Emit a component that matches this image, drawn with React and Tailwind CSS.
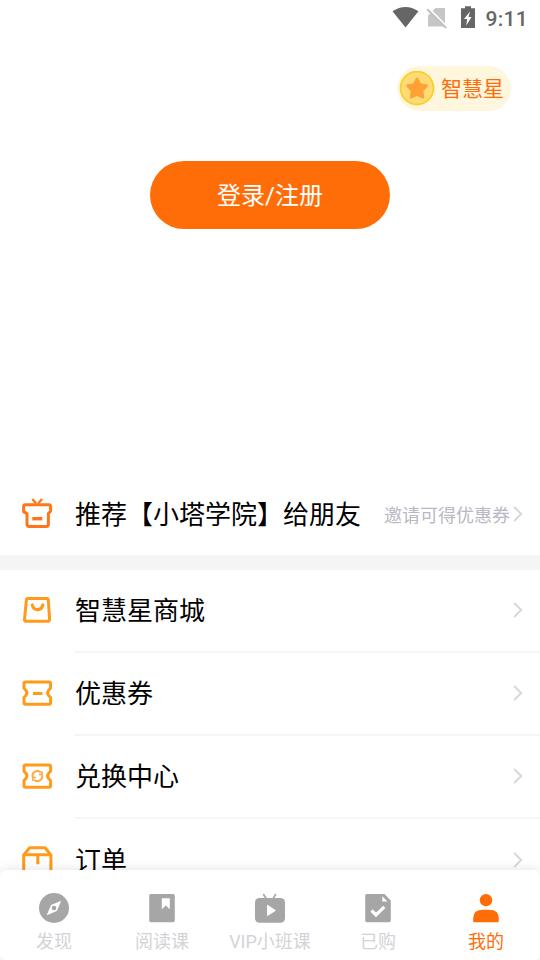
const GiftIcon = () => (
  <svg className="h-8 w-8" viewBox="0 0 32 32" fill="none" stroke="#ff7518" strokeWidth="3" strokeLinejoin="round">
    <path d="M4.3 6.7H27.7Q29.6 6.7 29.6 8.6V13.2L27.4 15.6V26.3Q27.4 28.4 25.3 28.4H8.2Q6 28.4 6 26.3V15.6L2.6 13.6V8.6Q2.6 6.7 4.3 6.7Z" />
    <path d="M11.3 1L15.2 5.5M20.9 1L17.3 5.5" strokeWidth="2.3" />
    <path d="M11.3 20.7H21.3" strokeWidth="3.4" />
  </svg>
);

const BagIcon = () => (
  <svg className="h-8 w-8" viewBox="0 0 32 32" fill="none" stroke="#ff9a1a" strokeWidth="3" strokeLinejoin="round">
    <path d="M6.8 4.6H25.9Q27.2 4.6 27.3 6L28.6 25.5Q28.7 27.2 27 27.2H5Q3.4 27.2 3.5 25.5L5.4 6Q5.6 4.6 6.8 4.6Z" />
    <path d="M11.3 11Q12.4 15.7 16.5 15.7Q20.6 15.7 21.8 11" strokeWidth="3.2" strokeLinecap="round" />
  </svg>
);

const ticketPath =
  "M4.5 4.9H28Q29.6 4.9 29.6 6.4V11.3L27.6 13.3Q25.6 15.9 27.6 18.5L29.6 20.5V25.8Q29.6 27.3 28 27.3H4.5Q3 27.3 3 25.8V20.5L4.9 18.5Q7 15.9 4.9 13.3L3 11.3V6.4Q3 4.9 4.5 4.9Z";

const CouponIcon = () => (
  <svg className="h-8 w-8" viewBox="0 0 32 32" fill="none" stroke="#ff9a1a" strokeWidth="3" strokeLinejoin="round">
    <path d={ticketPath} />
    <path d="M12 16.5H21.5" strokeWidth="3" />
  </svg>
);

const ExchangeIcon = () => (
  <svg className="h-8 w-8" viewBox="0 0 32 32" fill="none" stroke="#ff9a1a" strokeWidth="3" strokeLinejoin="round">
    <path d={ticketPath} />
    <g stroke="#ffa93e" strokeWidth="2">
      <path d="M11.7 17.2A4.8 4.8 0 0 1 19.8 12.6M21.1 15A4.8 4.8 0 0 1 13 19.6" />
      <path d="M21 11.2V14.6H17.8M11.8 21V17.6H15" strokeWidth="1.5" />
    </g>
  </svg>
);

const OrderIcon = () => (
  <svg className="h-8 w-8" viewBox="0 0 32 32" fill="none" stroke="#ff9a1a" strokeWidth="3" strokeLinejoin="round">
    <path d="M2.7 11L8.7 3.7H24L29.9 11V27Q29.9 29 28.3 29H4.3Q2.7 29 2.7 27Z" />
    <path d="M2.7 10.7H29.9M16.8 11V20.3" />
  </svg>
);

const Chevron = () => (
  <svg className="relative -top-px h-4 w-2.5" viewBox="0 0 10 16" fill="none" stroke="#d8d8da" strokeWidth="2">
    <path d="M1.2 1L8.2 8L1.2 15" />
  </svg>
);

const CompassIcon = () => (
  <svg className="h-8 w-8" viewBox="0 0 32 32">
    <circle cx="16" cy="16" r="15" fill="#a6a6a6" />
    <path d="M23.3 8.8L18.8 19L8.7 23.3L13 13Z" fill="#fff" />
    <circle cx="16" cy="16" r="2.3" fill="#a6a6a6" />
  </svg>
);

const BookIcon = () => (
  <svg className="h-8 w-8" viewBox="0 0 32 32">
    <rect x="3.2" y="2" width="25.6" height="28.3" rx="1.8" fill="#a6a6a6" />
    <path d="M15.8 6.2H23.8V17.3L19.8 13.5L15.8 17.3Z" fill="#fff" />
  </svg>
);

const TvIcon = () => (
  <svg className="h-8 w-8" viewBox="0 0 32 32">
    <rect x="1" y="6" width="30" height="24.7" rx="4.5" fill="#a6a6a6" />
    <path d="M9.3 2L12 6.5M21.8 2L19.2 6.5" stroke="#a6a6a6" strokeWidth="1.6" />
    <path d="M13.6 13.6L21 18.4L13.6 23.2Z" fill="#fff" stroke="#fff" strokeWidth="1.2" strokeLinejoin="round" />
  </svg>
);

const BoughtIcon = () => (
  <svg className="h-8 w-8" viewBox="0 0 32 32">
    <path d="M5 2H22.5L28.8 8.5V28.5Q28.8 30.3 27 30.3H5Q3.2 30.3 3.2 28.5V3.8Q3.2 2 5 2Z" fill="#a6a6a6" />
    <path d="M20.3 4.2L25.5 9.6H20.3Z" fill="#fff" />
    <path d="M9.5 18.5L14 23L22.3 14.8" fill="none" stroke="#fff" strokeWidth="3.2" />
  </svg>
);

const UserIcon = () => (
  <svg className="h-8 w-8" viewBox="0 0 32 32" fill="#ff6d08">
    <circle cx="16" cy="8.2" r="6.2" />
    <path d="M3.2 30.3V26Q3.2 17.7 13 17.7H19Q28.8 17.7 28.8 26V28.8Q28.8 30.3 27.3 30.3Z" />
  </svg>
);

const menu = [
  { label: "智慧星商城", icon: <BagIcon /> },
  { label: "优惠券", icon: <CouponIcon /> },
  { label: "兑换中心", icon: <ExchangeIcon /> },
  { label: "订单", icon: <OrderIcon /> },
];

const tabs = [
  { label: "发现", icon: <CompassIcon /> },
  { label: "阅读课", icon: <BookIcon /> },
  { label: "VIP小班课", icon: <TvIcon /> },
  { label: "已购", icon: <BoughtIcon /> },
  { label: "我的", icon: <UserIcon />, active: true },
];

const StatusBar = () => (
  <div className="flex h-9 shrink-0 items-center justify-end pr-3">
    <svg className="h-9 w-[90px]" viewBox="0 0 90 36">
      <path d="M3.5 11.2Q16.5 2.7 29.5 11.2L16.5 27.5Z" fill="#666" />
      <path d="M46.5 8H56V26.5H39V15.5Z" fill="#c6c6c6" />
      <path d="M39.2 8L58.5 27.3" stroke="#fff" strokeWidth="2" />
      <path d="M38.2 9.2L57.2 28" stroke="#c2c2c2" strokeWidth="2" />
      <path d="M76 6.2H82V8.2H86V28H72V8.2H76Z" fill="#666" />
      <path d="M81 11.5L75 19H78.2L77.2 25.5L82.6 17H79.6Z" fill="#fff" />
    </svg>
    <span className="ml-[6px] pt-[2px] font-[Roboto] text-[21px] font-medium leading-none tracking-[0.3px] text-[#666]">9:11</span>
  </div>
);

const App = () => {
  return (
    <div className="flex h-[960px] w-[540px] flex-col overflow-hidden bg-white font-['Roboto','Noto_Sans_CJK_SC',sans-serif] text-black">
      <StatusBar />

      {/* Account */}
      <div className="flex h-[438px] shrink-0 flex-col items-center pt-[30px]">
        <div className="mr-[29px] flex h-[45px] w-[114px] items-center self-end rounded-full bg-[#fff6de] pl-[2px]">
          <svg className="h-9 w-9 shrink-0" viewBox="0 0 36 36">
            <circle cx="18" cy="17" r="16.5" fill="#ffdb76" stroke="#f8d02c" strokeWidth="1.8" />
            <path d="M18 7.7L21.2 13.5L27.7 14.8L23.2 19.7L24 26.3L18 23.7L12 26.3L12.8 19.7L8.3 14.8L14.8 13.5Z" fill="#ffa135" stroke="#ffa135" strokeWidth="2.4" strokeLinejoin="round" />
          </svg>
          <span className="ml-[6px] whitespace-nowrap pt-[2px] text-[21px] leading-none text-[#ff6d08]">智慧星</span>
        </div>
        <button className="mt-[50px] h-[68px] w-60 rounded-full bg-[#ff6d08] pt-[2px] text-2xl text-white">登录/注册</button>
      </div>

      {/* Invite */}
      <div className="flex h-[81px] shrink-0 items-center pl-[21px] pr-[17px]">
        <div className="w-[54px] pb-[2px]">
          <GiftIcon />
        </div>
        <span className="whitespace-nowrap pt-[2px] text-[26px]">推荐【小塔学院】给朋友</span>
        <span className="ml-auto mr-[3px] whitespace-nowrap pt-[2px] text-lg text-[#b9b8c4]">邀请可得优惠券</span>
        <Chevron />
      </div>
      <div className="h-[15px] shrink-0 bg-[#f5f5f5]" />

      {/* Menu */}
      <div className="h-[300px] shrink-0 overflow-hidden">
        {menu.map((item) => (
          <div key={item.label} className="flex h-[83px] pl-[21px] last:h-[85px]">
            <div className="flex w-[54px] items-center pb-[4px]">{item.icon}</div>
            <div className="flex flex-1 items-center justify-between border-b-2 border-[#f5f5f5] pr-[17px]">
              <span className="pt-[2px] text-[26px]">{item.label}</span>
              <Chevron />
            </div>
          </div>
        ))}
      </div>

      {/* Tab bar */}
      <div className="relative flex h-[90px] shrink-0 rounded-md bg-white shadow-[0_0_12px_rgba(0,0,0,0.12)]">
        {tabs.map((tab) => (
          <div key={tab.label} className="flex w-[108px] flex-col items-center pt-[22px]">
            {tab.icon}
            <span className={`mt-[6px] whitespace-nowrap text-lg leading-6 ${tab.active ? "text-[#ff6d08]" : "text-[#d3d3d7]"}`}>
              {tab.label}
            </span>
          </div>
        ))}
      </div>
    </div>
  );
};

export default App;
